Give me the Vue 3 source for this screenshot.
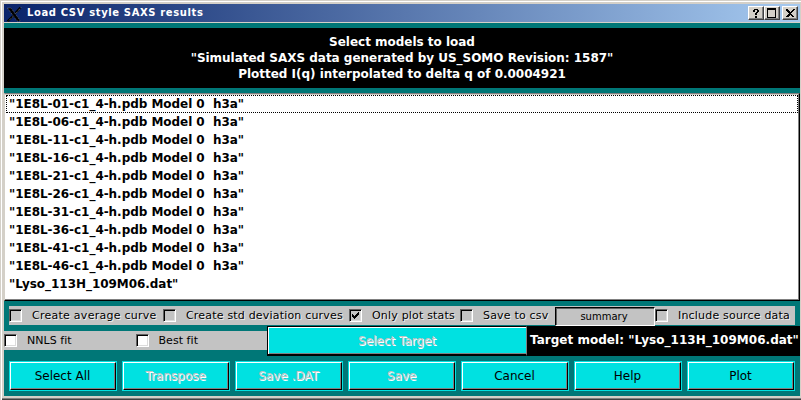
<script setup>
const heading = [
  'Select models to load',
  '"Simulated SAXS data generated by US_SOMO Revision: 1587"',
  'Plotted I(q) interpolated to delta q of 0.0004921',
]
const models = [
  ...['01', '06', '11', '16', '21', '26', '31', '36', '41', '46'].map(
    (n) => `"1E8L-${n}-c1_4-h.pdb Model 0  h3a"`
  ),
  '"Lyso_113H_109M06.dat"',
]
const checks = [
  { label: 'Create average curve', cls: 'c1' },
  { label: 'Create std deviation curves', cls: 'c2' },
  { label: 'Only plot stats', cls: 'c3', checked: true },
  { label: 'Save to csv', cls: 'c4' },
]
const buttons = [
  { label: 'Select All' },
  { label: 'Transpose', off: true },
  { label: 'Save .DAT', off: true },
  { label: 'Save', off: true },
  { label: 'Cancel' },
  { label: 'Help' },
  { label: 'Plot' },
]
</script>

<template>
  <div class="window">
    <header class="titlebar">
      <svg class="logo" width="15" height="15" viewBox="0 0 15 15">
        <path d="M.5 1h3.500l9.500 13h-3.500z" fill="#000" stroke="#888" stroke-width=".6" stroke-dasharray="1 1" />
        <path d="M13.500 .5L8.500 6M6 9L.5 14.500" stroke="#000" stroke-width="2.200" />
        <path d="M14 .5L8.500 7M6 9.500L1 14.500" stroke="#aaa" stroke-width=".7" stroke-dasharray="1 1" />
      </svg>
      <span class="title">Load CSV style SAXS results</span>
      <div class="wbtn">
        <svg width="15" height="13" shape-rendering="crispEdges"><path d="M5 2h4v1H5zM4 3h2v2H4zM8 3h2v2H8zM7 5h2v1H7zM6 6h2v2H6zM6 9h2v2H6z" /></svg>
      </div>
      <div class="wbtn">
        <svg width="15" height="13" shape-rendering="crispEdges"><path fill-rule="evenodd" d="M2 1h9v10H2zM3 3v7h7V3z" /></svg>
      </div>
      <div class="wbtn close">
        <svg width="15" height="13" shape-rendering="crispEdges"><path d="M3 2h2v1h1v1h1v1h1V4h1V3h1V2h2v1h-1v1h-1v1H9v1H8v1h1v1h1v1h1v1h-2V9H8V8H7v1H6v1H3V9h1V8h1V7h1V6H5V5H4V4H3z" /></svg>
      </div>
    </header>
    <main class="body">
      <div class="heading"><div v-for="h in heading" :key="h">{{ h }}</div></div>
      <div class="list">
        <div v-for="(m, i) in models" :key="m" class="item" :class="{ focus: i === 0 }">{{ m }}</div>
      </div>
      <div class="options">
        <div v-for="c in checks" :key="c.label" class="check" :class="c.cls">
          <i class="box grey"><svg v-if="c.checked" width="9" height="9" shape-rendering="crispEdges"><path d="M1 3h1v1h1v1h1V4h1V3h1V2h1V1h1v3H7v1H6v1H5v1H4v1H3V7H2V6H1z" /></svg></i>
          <span class="etched">{{ c.label }}</span>
        </div>
        <div class="summary">summary</div>
        <div class="check c5"><i class="box grey"></i><span class="etched">Include source data</span></div>
      </div>
      <div class="target">
        <div class="fits">
          <div class="check"><i class="box"></i><span>NNLS fit</span></div>
          <div class="check"><i class="box"></i><span>Best fit</span></div>
        </div>
        <div class="select"><span class="disabled">Select Target</span></div>
        <div class="model">Target model: "Lyso_113H_109M06.dat"</div>
      </div>
      <div class="buttons">
        <div v-for="b in buttons" :key="b.label" class="btn">
          <div class="face"><span :class="{ disabled: b.off }">{{ b.label }}</span></div>
        </div>
      </div>
    </main>
  </div>
</template>

<style>
body { margin: 0; overflow: hidden; }
</style>
<style scoped>
* { box-sizing: border-box; }
.window {
  width: 801px; height: 400px; padding: 3px 1px 4px 3px; overflow: hidden;
  font: 12px "DejaVu Sans", sans-serif; color: #000; white-space: pre;
  background: #d4d0c8; border: 1px solid #d4d0c8; border-width: 1px 0 0 1px;
  box-shadow: inset 1px 1px #fff, inset 0 -1px #404040, inset 0 -2px #808080;
}
.titlebar {
  display: flex; height: 18px; padding: 2px 2px 0 3px;
  background: linear-gradient(90deg, #0a246a, #a6caf0);
}
.logo { margin-top: 1px; }
.title { margin-left: 5px; flex: 1; color: #fff; font-weight: bold; font-size: 10px; line-height: 13px; letter-spacing: .62px; }
.wbtn {
  width: 16px; height: 14px; background: #d4d0c8;
  border: 1px solid; border-color: #fff #404040 #404040 #fff;
  box-shadow: inset -1px -1px #808080;
}
.wbtn svg { display: block; }
.close { margin-left: 2px; }
.body { margin-top: 1px; height: 373px; padding-top: 5px; background: #007777; }
.heading {
  height: 60px; padding-top: 6px; background: #000; color: #fff;
  font-weight: bold; line-height: 16px; text-align: center; letter-spacing: -.02px;
}
.list {
  margin-top: 5px; height: 208px; padding: 1px 1px 0 1px; background: #fff;
  border: 1px solid; border-color: #808080 #000 #000 #d4d0c8;
  box-shadow: inset -1px -1px #808080, inset 0 1px #d4d0c8;
  font-weight: bold; letter-spacing: -.045px;
}
.item { height: 18px; line-height: 16px; padding: 1px 0 0 3px; }
.focus { border: 1px dotted #000; padding: 0 0 0 2px; }
.options { display: flex; margin: 5px 5px 0; height: 19px; background: #c3c3c3; font-size: 11px; letter-spacing: .19px; }
.check { display: flex; align-items: center; height: 19px; }
.check span { margin-left: 10px; }
.c1 span { letter-spacing: .26px; }
.box {
  width: 13px; height: 13px; background: #fff;
  border: 1px solid; border-color: #606060 #fff #fff #606060;
  box-shadow: inset 1px 1px #000, inset -1px -1px #dcdcdc;
}
.box svg { display: block; margin: 1px; }
.grey { background: #c3c3c3; }
.etched { text-shadow: 1px 1px #eee; }
.c1 { width: 154px; }
.c2 { width: 186px; }
.c3 { width: 111px; }
.c4 { width: 95px; }
.summary {
  width: 100px; height: 19px; margin-top: 1px; line-height: 17px; text-align: center;
  font-size: 10px; letter-spacing: 0; padding-right: 2px; background: #c3c3c3;
  border: 1px solid; border-color: #000 #fff #fff #000;
  box-shadow: inset 1px 1px #606060; position: relative;
}
.target { display: flex; margin-top: 1px; height: 30px; }
.fits { display: flex; width: 263px; height: 19px; margin-top: 5px; background: #c3c3c3; font-size: 11px; letter-spacing: .05px; }
.fits .check { width: 132px; }
.select {
  width: 260px; background: #00e1e1; display: flex; align-items: center; justify-content: center;
  border: 1px solid #000; border-right-color: #808080; border-bottom-width: 2px; padding-top: 1px;
  box-shadow: inset 1px 1px #fff, inset 0 -1px #808080;
}
.disabled { color: #c3c3c3; text-shadow: 1px 1px #fff; }
.model { flex: 1; background: #000; color: #fff; font-weight: bold; line-height: 29px; padding-left: 3px; letter-spacing: .02px; }
.buttons { display: grid; grid-template-columns: repeat(7, 108px); gap: 5px; margin: 5px 5px 0; }
.btn { height: 30px; padding: 1px; background: #00e1e1; }
.face {
  height: 28px; display: flex; align-items: center; justify-content: center; padding-right: 1px;
  border: 1px solid; border-color: #fff #000 #000 #fff; box-shadow: inset -1px -1px #808080;
}
</style>
